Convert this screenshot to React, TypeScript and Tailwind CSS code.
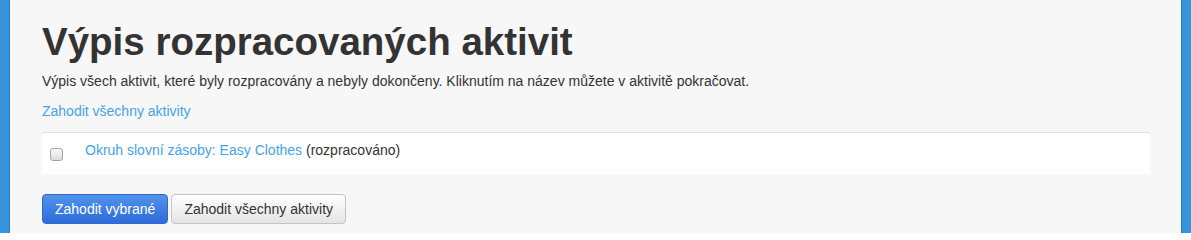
import React from "react";

export default function App() {
  return (
    <div
      className="flex min-h-[233px] h-[233px] overflow-hidden bg-[#f7f7f7] text-[#333] text-[14px] leading-[20px]"
      style={{ fontFamily: '"Liberation Sans", Arial, sans-serif' }}
    >
      <div className="w-[10px] shrink-0 bg-[#3794d8] border-r border-[#2a7fc4]" />
      <main className="flex-1 pl-[32px] pr-[31px] pt-[23px]">
        <h1 className="text-[38.5px] font-bold leading-[38px] text-[#333]">
          Výpis rozpracovaných aktivit
        </h1>
        <p className="mt-[10px]">
          Výpis všech aktivit, které byly rozpracovány a nebyly dokončeny. Kliknutím na název můžete v aktivitě pokračovat.
        </p>
        <p className="mt-[10px]">
          <a href="#" className="text-[#44a3ea]">
            Zahodit všechny aktivity
          </a>
        </p>
        <div className="mt-[11px] flex h-[42px] border-t border-[#dddddd] bg-white">
          <div className="w-[36px] shrink-0 pl-[8px] pt-[15px]">
            <span className="block h-[13px] w-[13px] rounded-[3px] border border-[#a3a3a3] bg-gradient-to-b from-[#fcfcfc] to-[#dcdcdc]" />
          </div>
          <div className="pl-[7px] pt-[7px]">
            <a href="#" className="text-[#44a3ea]">
              Okruh slovní zásoby: Easy Clothes
            </a>{" "}
            (rozpracováno)
          </div>
        </div>
        <div className="mt-[20px] flex gap-[3px]">
          <button className="h-[30px] rounded-[4px] border border-[#2f68cc] bg-gradient-to-b from-[#4f93ea] to-[#2f6bd9] px-[12px] text-[14px] leading-[20px] text-white">
            Zahodit vybrané
          </button>
          <button className="h-[30px] rounded-[4px] border border-[#c4c4c4] bg-gradient-to-b from-[#ffffff] to-[#e4e4e4] px-[12px] text-[14px] leading-[20px] text-[#333]">
            Zahodit všechny aktivity
          </button>
        </div>
      </main>
      <div className="w-[10px] shrink-0 bg-[#3794d8] border-l border-[#2a7fc4]" />
    </div>
  );
}
